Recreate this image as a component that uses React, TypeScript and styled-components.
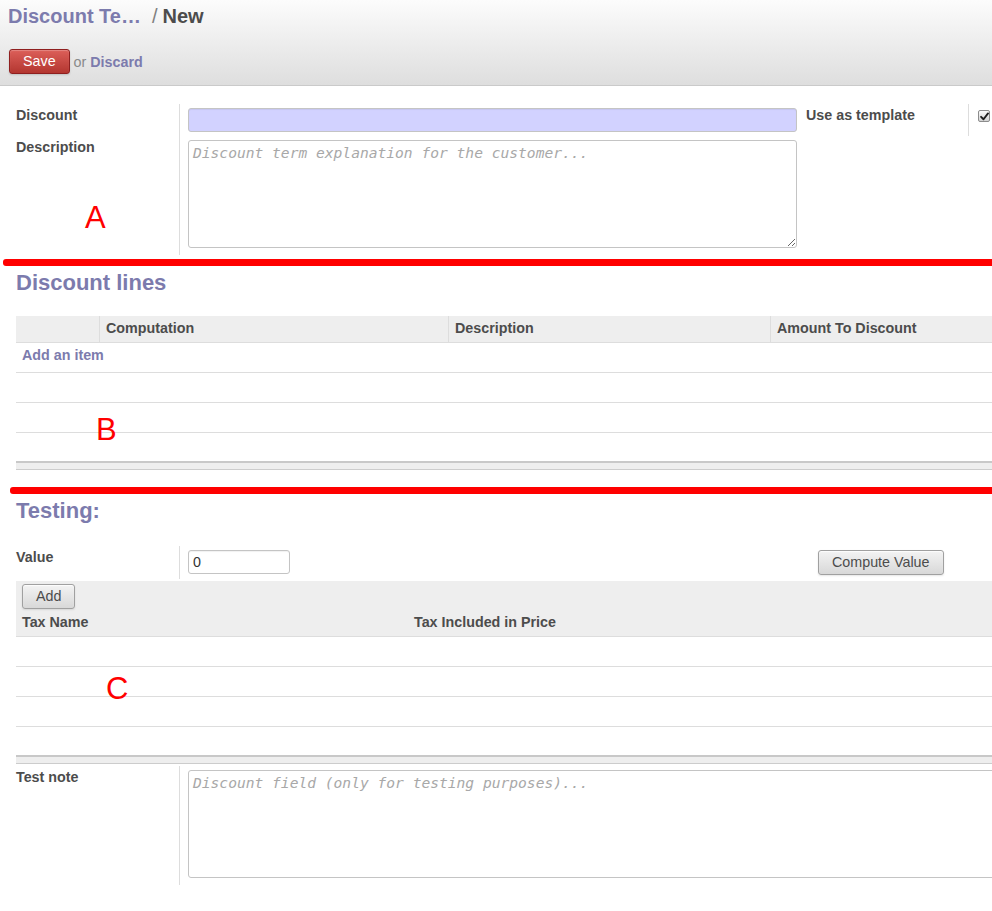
import React from "react";
import styled, { createGlobalStyle } from "styled-components";

const GlobalStyle = createGlobalStyle`
  html, body { margin: 0; padding: 0; background: #fff; overflow: hidden; }
  body {
    font-family: "Liberation Sans", Arial, sans-serif;
    font-size: 14.3px;
    color: #4c4c4c;
  }
  * { box-sizing: border-box; }
`;

const Page = styled.div`
  position: relative;
  width: 992px;
  height: 911px;
  overflow: hidden;
`;

const Header = styled.header`
  height: 86px;
  padding: 4px 0 0 8px;
  background: linear-gradient(to bottom, #fcfcfc, #dedede);
  border-bottom: 1px solid #cacaca;
`;

const Breadcrumb = styled.div`
  display: flex;
  align-items: baseline;
  font-size: 20px;
  line-height: 24px;
  font-weight: bold;
  white-space: nowrap;
`;

const CrumbLink = styled.span`
  color: #7c7bad;
`;

const CrumbSep = styled.span`
  color: #808080;
  font-weight: normal;
  margin: 0 5px 0 11px;
`;

const CrumbCurrent = styled.span`
  color: #4c4c4c;
`;

const ButtonBar = styled.div`
  display: flex;
  align-items: center;
  margin-top: 21px;
  margin-left: 1px;
`;

const SaveButton = styled.button`
  height: 25px;
  padding: 0 13px;
  border: 1px solid #8f1f1f;
  border-radius: 3px;
  background: linear-gradient(to bottom, #dc5f59, #b33630);
  box-shadow: 0 1px 2px rgba(0, 0, 0, 0.15), inset 0 1px 1px rgba(255, 255, 255, 0.25);
  color: #fff;
  font-family: "Liberation Sans", Arial, sans-serif;
  font-size: 14.3px;
  line-height: 23px;
`;

const OrText = styled.span`
  margin-left: 4px;
  color: #8a8a8a;
  font-size: 14.3px;
`;

const DiscardLink = styled.span`
  color: #7c7bad;
  font-weight: bold;
`;

const Sheet = styled.div`
  display: flex;
  flex-direction: column;
  width: 1200px;
  padding: 18px 0 0 16px;
`;

const FieldGrid = styled.div<{ $cols: string; $top?: number }>`
  display: grid;
  grid-template-columns: ${(p) => p.$cols};
  margin-top: ${(p) => p.$top ?? 0}px;
`;

const LabelCell = styled.div<{ $divider?: boolean }>`
  padding-top: 3px;
  font-weight: bold;
  line-height: 17px;
  color: #4c4c4c;
  border-right: 1px solid ${(p) => (p.$divider ? "#dddddd" : "transparent")};
`;

const FieldCell = styled.div<{ $padLeft?: number; $padBottom?: number }>`
  padding: 4px 0 ${(p) => p.$padBottom ?? 4}px ${(p) => p.$padLeft ?? 8}px;
`;

const TextInput = styled.input<{ $required?: boolean; $width: number }>`
  display: block;
  width: ${(p) => p.$width}px;
  height: 24px;
  margin: 0;
  padding: 0 4px;
  border: 1px solid #c4c4c4;
  border-radius: 3px;
  background: ${(p) => (p.$required ? "#d2d2ff" : "#ffffff")};
  box-shadow: inset 0 1px 1px rgba(0, 0, 0, 0.06);
  font-family: "Liberation Sans", Arial, sans-serif;
  font-size: 14.3px;
  color: #333;
  outline: none;
`;

const NoteArea = styled.textarea<{ $width: number }>`
  display: block;
  width: ${(p) => p.$width}px;
  height: 108px;
  margin: 0;
  padding: 3px 4px;
  border: 1px solid #c4c4c4;
  border-radius: 3px;
  background: #fff;
  font-family: "DejaVu Sans Mono", "Liberation Mono", monospace;
  font-size: 14.6px;
  color: #333;
  resize: vertical;
  outline: none;
  &::placeholder {
    color: #a8a8a8;
    font-style: italic;
  }
`;

const CheckBox = styled.span`
  display: flex;
  align-items: center;
  justify-content: center;
  width: 12px;
  height: 12px;
  margin-top: 2px;
  border: 1px solid #8c8c8c;
  border-radius: 2px;
  background: linear-gradient(to bottom, #fafafa, #d4d4d4);
`;

const RedStroke = styled.div<{ $inset: number; $top: number }>`
  height: 7px;
  margin-top: ${(p) => p.$top}px;
  margin-left: ${(p) => p.$inset}px;
  background: #ff0000;
  border-radius: 3px 0 0 3px;
`;

const SectionTitle = styled.h2`
  margin: 4px 0 20px;
  font-size: 22px;
  line-height: 26px;
  font-weight: bold;
  color: #7c7bad;
`;

const ListHead = styled.div<{ $cols: string }>`
  display: grid;
  grid-template-columns: ${(p) => p.$cols};
  background: #eeeeee;
  border-bottom: 1px solid #dddddd;
`;

const HeadCell = styled.div<{ $sep?: boolean }>`
  padding: 4px 6px 5px;
  font-weight: bold;
  line-height: 17px;
  color: #4c4c4c;
  white-space: nowrap;
  border-left: 1px solid ${(p) => (p.$sep ? "#dddddd" : "transparent")};
`;

const ListRow = styled.div<{ $last?: boolean }>`
  height: ${(p) => (p.$last ? 28 : 30)}px;
  padding: 4px 6px;
  line-height: 17px;
  border-bottom: 1px solid ${(p) => (p.$last ? "transparent" : "#dddddd")};
`;

const AddItemLink = styled.span`
  color: #7c7bad;
  font-weight: bold;
`;

const ListFoot = styled.div`
  height: 9px;
  background: #eeeeee;
  border-top: 2px solid #c8c8c8;
  border-bottom: 1px solid #cccccc;
`;

const TaxHead = styled.div`
  padding: 3px 0 5px;
  background: #eeeeee;
  border-bottom: 1px solid #dddddd;
`;

const TaxTitles = styled.div`
  display: grid;
  grid-template-columns: 392px 1fr;
  margin-top: 5px;
`;

const TaxTitle = styled.div`
  padding: 0 6px;
  font-weight: bold;
  line-height: 17px;
`;

const GrayButton = styled.button<{ $left?: number }>`
  height: 25px;
  margin-left: ${(p) => p.$left ?? 0}px;
  padding: 0 13px;
  border: 1px solid #a0a0a0;
  border-radius: 3px;
  background: linear-gradient(to bottom, #f3f3f3, #d8d8d8);
  box-shadow: 0 1px 2px rgba(0, 0, 0, 0.1), inset 0 1px 1px rgba(255, 255, 255, 0.8);
  font-family: "Liberation Sans", Arial, sans-serif;
  font-size: 14.3px;
  line-height: 23px;
  color: #4c4c4c;
`;

const Annotation = styled.span<{ $x: number; $y: number }>`
  position: absolute;
  left: ${(p) => p.$x}px;
  top: ${(p) => p.$y}px;
  font-family: "Liberation Sans", Arial, sans-serif;
  font-size: 31px;
  line-height: 31px;
  color: #ff0000;
  pointer-events: none;
`;

const EmptyRows: React.FC<{ first?: React.ReactNode }> = ({ first }) => (
  <>
    <ListRow>{first}</ListRow>
    <ListRow />
    <ListRow />
    <ListRow $last />
    <ListFoot />
  </>
);

export default function App() {
  return (
    <Page>
      <GlobalStyle />
      <Header>
        <Breadcrumb>
          <CrumbLink>Discount Te…</CrumbLink>
          <CrumbSep>/</CrumbSep>
          <CrumbCurrent>New</CrumbCurrent>
        </Breadcrumb>
        <ButtonBar>
          <SaveButton>Save</SaveButton>
          <OrText>
            or <DiscardLink>Discard</DiscardLink>
          </OrText>
        </ButtonBar>
      </Header>

      <Sheet>
        <FieldGrid $cols="164px 626px 163px 1fr">
          <LabelCell $divider>Discount</LabelCell>
          <FieldCell>
            <TextInput $required $width={609} />
          </FieldCell>
          <LabelCell $divider>Use as template</LabelCell>
          <FieldCell $padLeft={9}>
            <CheckBox>
              <svg width="9" height="9" viewBox="0 0 10 10">
                <path
                  d="M1.2 5.4 L3.9 8.1 L8.9 1.6"
                  fill="none"
                  stroke="#1e1e1e"
                  strokeWidth="2.1"
                  strokeLinecap="round"
                  strokeLinejoin="round"
                />
              </svg>
            </CheckBox>
          </FieldCell>
          <LabelCell $divider>Description</LabelCell>
          <FieldCell $padBottom={7}>
            <NoteArea
              $width={609}
              placeholder="Discount term explanation for the customer..."
            />
          </FieldCell>
          <LabelCell />
          <FieldCell />
        </FieldGrid>

        <RedStroke $inset={-13} $top={4} />
        <SectionTitle>Discount lines</SectionTitle>

        <ListHead $cols="83px 349px 322px 1fr">
          <HeadCell />
          <HeadCell $sep>Computation</HeadCell>
          <HeadCell $sep>Description</HeadCell>
          <HeadCell $sep>Amount To Discount</HeadCell>
        </ListHead>
        <EmptyRows first={<AddItemLink>Add an item</AddItemLink>} />

        <RedStroke $inset={-6} $top={17} />
        <SectionTitle>Testing:</SectionTitle>

        <FieldGrid $cols="164px 626px 1fr" $top={2}>
          <LabelCell $divider>Value</LabelCell>
          <FieldCell>
            <TextInput $width={102} defaultValue="0" />
          </FieldCell>
          <FieldCell $padLeft={12}>
            <GrayButton>Compute Value</GrayButton>
          </FieldCell>
        </FieldGrid>

        <FieldGrid $cols="1fr" $top={2}>
          <TaxHead>
            <GrayButton $left={6}>Add</GrayButton>
            <TaxTitles>
              <TaxTitle>Tax Name</TaxTitle>
              <TaxTitle>Tax Included in Price</TaxTitle>
            </TaxTitles>
          </TaxHead>
          <EmptyRows />
        </FieldGrid>

        <FieldGrid $cols="164px 1fr" $top={2}>
          <LabelCell $divider>Test note</LabelCell>
          <FieldCell $padBottom={7}>
            <NoteArea
              $width={900}
              placeholder="Discount field (only for testing purposes)..."
            />
          </FieldCell>
        </FieldGrid>
      </Sheet>

      <Annotation $x={85} $y={202}>A</Annotation>
      <Annotation $x={96} $y={414}>B</Annotation>
      <Annotation $x={106} $y={673}>C</Annotation>
    </Page>
  );
}
